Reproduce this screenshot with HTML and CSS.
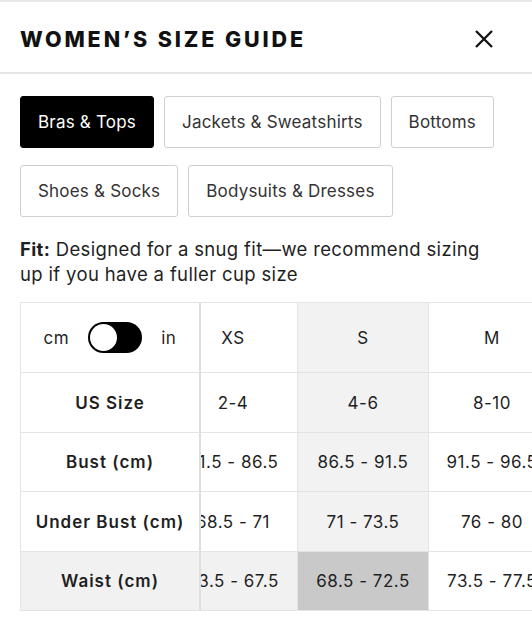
FILE: index.html
```html
<!DOCTYPE html>
<html>
<head>
	<meta charset="utf-8">
	<title>Women's Size Guide</title>
	<link rel="stylesheet" href="styles.css">
</head>
<body>
	<div class="header">
		<h2 class="title">WOMEN’S SIZE GUIDE</h2>
		<button class="close-btn" aria-label="Close">
			<svg width="18" height="18" viewBox="0 0 18 18"><path d="M1 1L17 17M17 1L1 17" stroke="#111" stroke-width="2.3" fill="none"/></svg>
		</button>
	</div>

	<div class="main">
		<div class="tabs">
			<button class="tab active">Bras &amp; Tops</button>
			<button class="tab">Jackets &amp; Sweatshirts</button>
			<button class="tab">Bottoms</button>
			<button class="tab">Shoes &amp; Socks</button>
			<button class="tab">Bodysuits &amp; Dresses</button>
		</div>

		<p class="fit"><b>Fit:</b> Designed for a snug fit—we recommend sizing up if you have a fuller cup size</p>

		<div class="size-table">
			<div class="label-col">
				<div class="cell head">
					<span>cm</span>
					<span class="switch"><i></i></span>
					<span>in</span>
				</div>
				<div class="cell">US Size</div>
				<div class="cell">Bust (cm)</div>
				<div class="cell">Under Bust (cm)</div>
				<div class="cell hl">Waist (cm)</div>
			</div>
			<div class="data-view">
				<div class="data-cols">
					<div class="col col-xs">
						<div class="cell head">XS</div>
						<div class="cell">2-4</div>
						<div class="cell">81.5 - 86.5</div>
						<div class="cell">68.5 - 71</div>
						<div class="cell hl">63.5 - 67.5</div>
					</div>
					<div class="col col-s col-hl">
						<div class="cell head">S</div>
						<div class="cell">4-6</div>
						<div class="cell">86.5 - 91.5</div>
						<div class="cell">71 - 73.5</div>
						<div class="cell cross">68.5 - 72.5</div>
					</div>
					<div class="col col-m">
						<div class="cell head">M</div>
						<div class="cell">8-10</div>
						<div class="cell">91.5 - 96.5</div>
						<div class="cell">76 - 80</div>
						<div class="cell">73.5 - 77.5</div>
					</div>
				</div>
			</div>
		</div>
	</div>
</body>
</html>
```

FILE: styles.css
```css
* {
	margin: 0;
	padding: 0;
	box-sizing: border-box;
}
body {
	width: 532px;
	overflow: hidden;
	font-family: Inter, "Liberation Sans", sans-serif;
	color: #1f1f1f;
	background: #fff;
}

.header {
	display: flex;
	align-items: center;
	justify-content: space-between;
	height: 74px;
	padding: 3px 39px 0 20px;
	border-top: 2px solid #e8e8e8;
	border-bottom: 2px solid #e6e6e6;
}
.title {
	font-size: 21.5px;
	font-weight: 800;
	letter-spacing: 2.9px;
	color: #111;
}
.close-btn {
	border: 0;
	background: none;
	display: flex;
}

.main {
	padding: 22px 0 0 20px;
}

.tabs {
	display: flex;
	flex-wrap: wrap;
	gap: 17px 10px;
	padding-right: 20px;
}
.tab {
	height: 52px;
	padding: 0 17px;
	border: 1px solid #cfcfcf;
	border-radius: 3px;
	background: #fff;
	font-family: inherit;
	font-size: 17px;
	letter-spacing: 0.2px;
	color: #333;
	cursor: pointer;
}
.tab.active {
	background: #000;
	border-color: #000;
	color: #fff;
}

.fit {
	max-width: 480px;
	margin: 20px 0 15px;
	font-size: 18.5px;
	line-height: 25px;
	letter-spacing: 0.35px;
}
.fit b {
	font-weight: 700;
}

.size-table {
	display: flex;
	border-top: 1px solid #e4e4e4;
}
.cell {
	display: flex;
	align-items: center;
	justify-content: center;
	height: 60px;
	border-bottom: 1px solid #e4e4e4;
	border-right: 1px solid #e4e4e4;
	font-size: 17px;
	letter-spacing: 0.5px;
	white-space: nowrap;
}
.cell:nth-child(odd) {
	height: 59px;
}
.cell.head {
	height: 70px;
}
.label-col {
	width: 181px;
	flex: none;
	border-left: 1px solid #e4e4e4;
}
.label-col .cell {
	font-weight: 600;
	letter-spacing: 1px;
	border-right: 2px solid #dedede;
}
.label-col .cell.head {
	font-weight: 400;
	letter-spacing: 0.5px;
	gap: 19px;
}
.switch {
	display: inline-block;
	width: 54px;
	height: 31px;
	padding: 2px;
	border-radius: 16px;
	background: #000;
}
.switch i {
	display: block;
	width: 27px;
	height: 27px;
	border-radius: 50%;
	background: #fff;
}

.data-view {
	flex: 1;
	overflow: hidden;
}
.data-cols {
	display: flex;
	margin-left: -32px;
}
.col {
	flex: none;
}
.col-xs {
	width: 129px;
}
.col-s {
	width: 131px;
}
.col-m {
	width: 127px;
}
.col-hl {
	background: #f2f2f2;
}
.cell.hl {
	background: #f1f1f1;
}
.cell.cross {
	background: #c9c9c9;
}
```
